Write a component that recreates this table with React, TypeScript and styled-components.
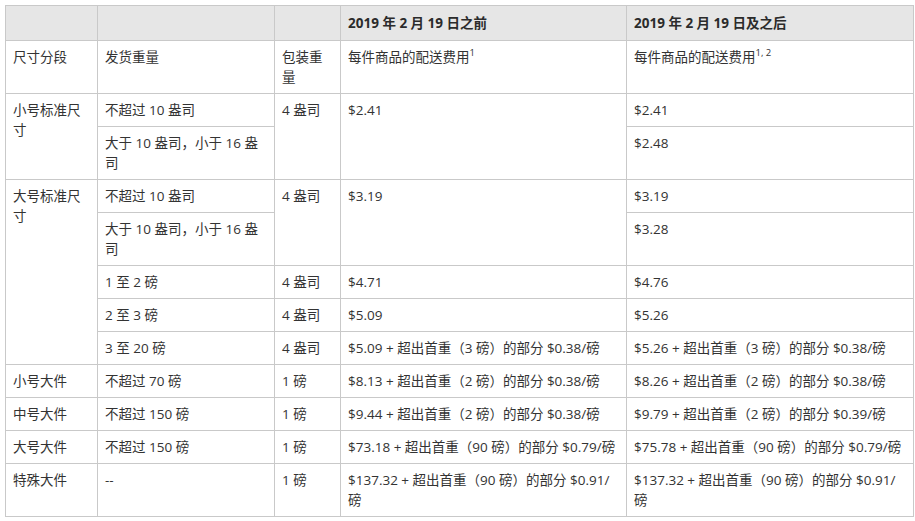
import React from "react";
import styled, { createGlobalStyle } from "styled-components";

const Global = createGlobalStyle`
  html, body { margin: 0; padding: 0; background: #ffffff; }
  body { font-family: "Open Sans", "Noto Sans CJK SC", sans-serif; color: #333333; }
`;

const Page = styled.div`
  padding: 5px 3px 0 5px;
`;

const Table = styled.table`
  border-collapse: collapse;
  table-layout: fixed;
  width: 908px;
  font-size: 13.5px;
  line-height: 20px;
`;

const Col = styled.col<{ $w: number }>`
  width: ${(p) => p.$w}px;
`;

const HeadCell = styled.th`
  background: #e6e6e6;
  border: 1px solid #c9c9c9;
  padding: 7px 7px;
  text-align: left;
  font-weight: 700;
  vertical-align: top;
  color: #2b2b2b;
`;

const Cell = styled.td`
  border: 1px solid #c9c9c9;
  padding: 6px 7px;
  text-align: left;
  vertical-align: top;
  font-weight: 400;
  word-break: break-all;
`;

const Sup = styled.sup`
  font-size: 9.5px;
  line-height: 0;
  vertical-align: 6px;
`;

type Row = {
  size?: { text: string; span: number };
  weight: string;
  pack?: { text: string; span: number };
  before?: { text: string; span: number };
  after: string;
};

const rows: Row[] = [
  { size: { text: "小号标准尺寸", span: 2 }, weight: "不超过 10 盎司", pack: { text: "4 盎司", span: 2 }, before: { text: "$2.41", span: 2 }, after: "$2.41" },
  { weight: "大于 10 盎司，小于 16 盎司", after: "$2.48" },
  { size: { text: "大号标准尺寸", span: 5 }, weight: "不超过 10 盎司", pack: { text: "4 盎司", span: 2 }, before: { text: "$3.19", span: 2 }, after: "$3.19" },
  { weight: "大于 10 盎司，小于 16 盎司", after: "$3.28" },
  { weight: "1 至 2 磅", pack: { text: "4 盎司", span: 1 }, before: { text: "$4.71", span: 1 }, after: "$4.76" },
  { weight: "2 至 3 磅", pack: { text: "4 盎司", span: 1 }, before: { text: "$5.09", span: 1 }, after: "$5.26" },
  { weight: "3 至 20 磅", pack: { text: "4 盎司", span: 1 }, before: { text: "$5.09 + 超出首重（3 磅）的部分 $0.38/磅", span: 1 }, after: "$5.26 + 超出首重（3 磅）的部分 $0.38/磅" },
  { size: { text: "小号大件", span: 1 }, weight: "不超过 70 磅", pack: { text: "1 磅", span: 1 }, before: { text: "$8.13 + 超出首重（2 磅）的部分 $0.38/磅", span: 1 }, after: "$8.26 + 超出首重（2 磅）的部分 $0.38/磅" },
  { size: { text: "中号大件", span: 1 }, weight: "不超过 150 磅", pack: { text: "1 磅", span: 1 }, before: { text: "$9.44 + 超出首重（2 磅）的部分 $0.38/磅", span: 1 }, after: "$9.79 + 超出首重（2 磅）的部分 $0.39/磅" },
  { size: { text: "大号大件", span: 1 }, weight: "不超过 150 磅", pack: { text: "1 磅", span: 1 }, before: { text: "$73.18 + 超出首重（90 磅）的部分 $0.79/磅", span: 1 }, after: "$75.78 + 超出首重（90 磅）的部分 $0.79/磅" },
  { size: { text: "特殊大件", span: 1 }, weight: "--", pack: { text: "1 磅", span: 1 }, before: { text: "$137.32 + 超出首重（90 磅）的部分 $0.91/磅", span: 1 }, after: "$137.32 + 超出首重（90 磅）的部分 $0.91/磅" },
];

export default function App() {
  return (
    <Page>
      <Global />
      <Table>
        <colgroup>
          <Col $w={92} />
          <Col $w={177} />
          <Col $w={66} />
          <Col $w={286} />
          <Col $w={287} />
        </colgroup>
        <thead>
          <tr>
            <HeadCell />
            <HeadCell />
            <HeadCell />
            <HeadCell>2019 年 2 月 19 日之前</HeadCell>
            <HeadCell>2019 年 2 月 19 日及之后</HeadCell>
          </tr>
        </thead>
        <tbody>
          <tr>
            <Cell>尺寸分段</Cell>
            <Cell>发货重量</Cell>
            <Cell>包装重量</Cell>
            <Cell>
              每件商品的配送费用<Sup>1</Sup>
            </Cell>
            <Cell>
              每件商品的配送费用<Sup>1, 2</Sup>
            </Cell>
          </tr>
          {rows.map((r, i) => (
            <tr key={i}>
              {r.size && <Cell rowSpan={r.size.span}>{r.size.text}</Cell>}
              <Cell>{r.weight}</Cell>
              {r.pack && <Cell rowSpan={r.pack.span}>{r.pack.text}</Cell>}
              {r.before && <Cell rowSpan={r.before.span}>{r.before.text}</Cell>}
              <Cell>{r.after}</Cell>
            </tr>
          ))}
        </tbody>
      </Table>
    </Page>
  );
}
